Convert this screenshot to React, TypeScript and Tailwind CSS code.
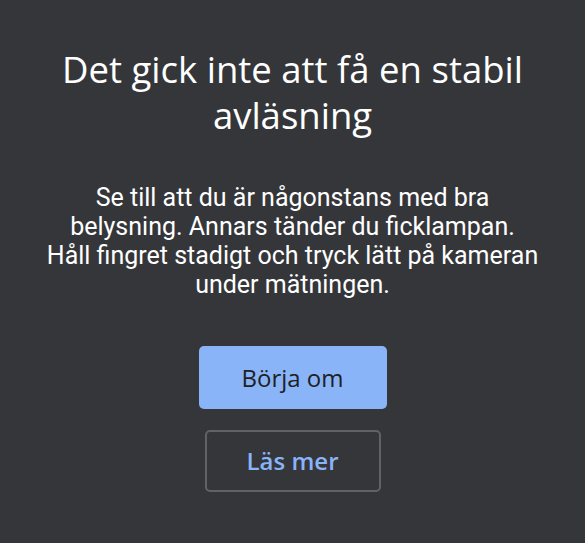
export default function App() {
    return (
        <div className="w-[585px] h-[543px] bg-[#35363a] flex flex-col items-center pt-[46px] text-center font-['Roboto',sans-serif]">
            <h1 className="text-[36.5px] leading-[46px] text-white font-['Open_Sans','Roboto',sans-serif] whitespace-nowrap">
                Det gick inte att få en stabil
                <br />
                avläsning
            </h1>
            <p className="mt-[45px] text-[25px] leading-[29px] text-white whitespace-nowrap">
                Se till att du är någonstans med bra
                <br />
                belysning. Annars tänder du ficklampan.
                <br />
                Håll fingret stadigt och tryck lätt på kameran
                <br />
                under mätningen.
            </p>
            <button className="mt-[47px] w-[188px] h-[63px] rounded-[5px] bg-[#8ab4f8] text-[#202124] text-[24px] font-['Open_Sans','Roboto',sans-serif]">
                Börja om
            </button>
            <button className="mt-[21px] w-[176px] h-[62px] rounded-[5px] border-2 border-[#5f6368] text-[#8ab4f8] text-[24px] font-semibold font-['Open_Sans','Roboto',sans-serif]">
                Läs mer
            </button>
        </div>
    );
}
